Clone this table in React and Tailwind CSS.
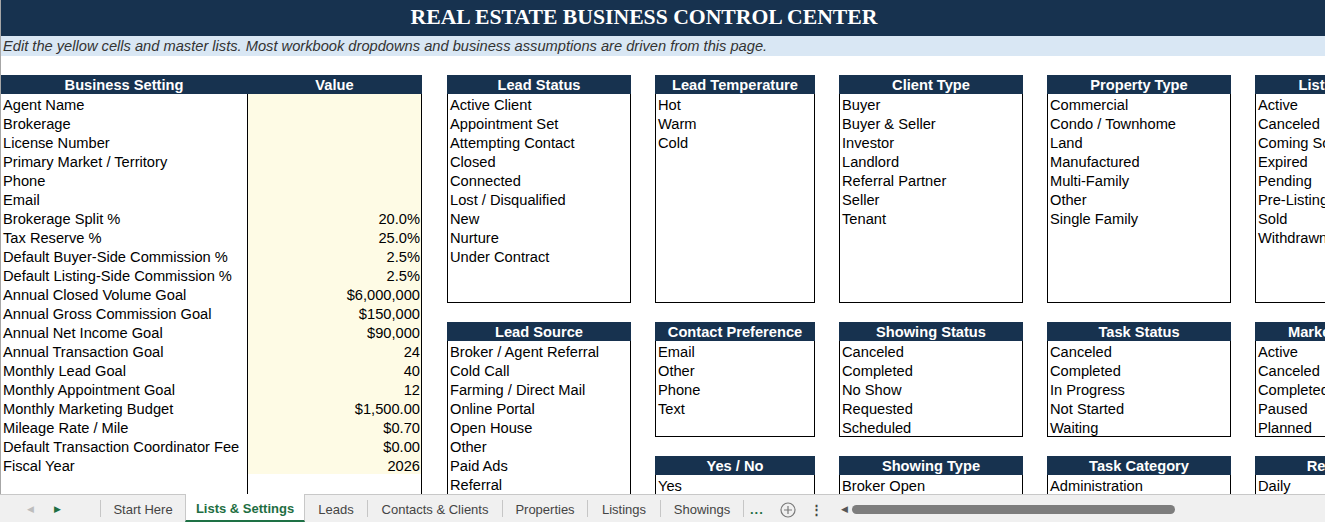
import React from "react";

const settings = [
  ["Agent Name", ""],
  ["Brokerage", ""],
  ["License Number", ""],
  ["Primary Market / Territory", ""],
  ["Phone", ""],
  ["Email", ""],
  ["Brokerage Split %", "20.0%"],
  ["Tax Reserve %", "25.0%"],
  ["Default Buyer-Side Commission %", "2.5%"],
  ["Default Listing-Side Commission %", "2.5%"],
  ["Annual Closed Volume Goal", "$6,000,000"],
  ["Annual Gross Commission Goal", "$150,000"],
  ["Annual Net Income Goal", "$90,000"],
  ["Annual Transaction Goal", "24"],
  ["Monthly Lead Goal", "40"],
  ["Monthly Appointment Goal", "12"],
  ["Monthly Marketing Budget", "$1,500.00"],
  ["Mileage Rate / Mile", "$0.70"],
  ["Default Transaction Coordinator Fee", "$0.00"],
  ["Fiscal Year", "2026"],
];

// each column of master lists, stacked top to bottom
const columns = [
  {
    width: "w-[184px]",
    lists: [
      {
        title: "Lead Status",
        body: "h-[209px]",
        items: ["Active Client", "Appointment Set", "Attempting Contact", "Closed", "Connected", "Lost / Disqualified", "New", "Nurture", "Under Contract"],
      },
      {
        title: "Lead Source",
        body: "h-[209px]",
        items: ["Broker / Agent Referral", "Cold Call", "Farming / Direct Mail", "Online Portal", "Open House", "Other", "Paid Ads", "Referral"],
      },
    ],
  },
  {
    width: "w-[160px]",
    lists: [
      { title: "Lead Temperature", body: "h-[209px]", items: ["Hot", "Warm", "Cold"] },
      { title: "Contact Preference", body: "h-[96px]", items: ["Email", "Other", "Phone", "Text"] },
      { title: "Yes / No", body: "h-[60px]", items: ["Yes"] },
    ],
  },
  {
    width: "w-[184px]",
    lists: [
      { title: "Client Type", body: "h-[209px]", items: ["Buyer", "Buyer & Seller", "Investor", "Landlord", "Referral Partner", "Seller", "Tenant"] },
      { title: "Showing Status", body: "h-[96px]", items: ["Canceled", "Completed", "No Show", "Requested", "Scheduled"] },
      { title: "Showing Type", body: "h-[60px]", items: ["Broker Open"] },
    ],
  },
  {
    width: "w-[184px]",
    lists: [
      { title: "Property Type", body: "h-[209px]", items: ["Commercial", "Condo / Townhome", "Land", "Manufactured", "Multi-Family", "Other", "Single Family"] },
      { title: "Task Status", body: "h-[96px]", items: ["Canceled", "Completed", "In Progress", "Not Started", "Waiting"] },
      { title: "Task Category", body: "h-[60px]", items: ["Administration"] },
    ],
  },
  {
    width: "w-[184px]",
    lists: [
      { title: "Listing Status", body: "h-[209px]", items: ["Active", "Canceled", "Coming Soon", "Expired", "Pending", "Pre-Listing", "Sold", "Withdrawn"] },
      { title: "Marketing Status", body: "h-[96px]", items: ["Active", "Canceled", "Completed", "Paused", "Planned"] },
      { title: "Recurrence", body: "h-[60px]", items: ["Daily"] },
    ],
  },
];

const tabs = [
  { name: "Start Here", w: "w-[84px]" },
  { name: "Lists & Settings", w: "w-[120px]", active: true },
  { name: "Leads", w: "w-[62px]" },
  { name: "Contacts & Clients", w: "w-[134px]" },
  { name: "Properties", w: "w-[84px]" },
  { name: "Listings", w: "w-[72px]" },
  { name: "Showings", w: "w-[82px]" },
];

const ListBox = ({ title, body, items, first }) => (
  <div className={first ? "" : "mt-[19px]"}>
    <div className="h-[19px] bg-[#17324f] text-white font-bold text-center leading-[20px]">
      {title}
    </div>
    <div className={`${body} border-x border-b border-black overflow-hidden`}>
      {items.map((item, i) => (
        <div key={i} className="h-[19px] leading-[22px] pl-[2px] whitespace-nowrap">
          {item}
        </div>
      ))}
    </div>
  </div>
);

const App = () => {
  return (
    <div
      className="w-[1325px] h-[522px] overflow-hidden flex flex-col bg-white text-black text-[14.67px]"
      style={{ fontFamily: '"Liberation Sans", Arial, sans-serif' }}
    >
      <div className="flex-1 flex flex-col overflow-hidden border-l border-[#a6a6a6]">
        {/* Title */}
        <div
          className="h-[36px] shrink-0 bg-[#17324f] text-white font-bold text-[21.7px] flex items-center justify-center pr-[38px] pb-[1px]"
          style={{ fontFamily: '"Liberation Serif", "Times New Roman", serif' }}
        >
          REAL ESTATE BUSINESS CONTROL CENTER
        </div>

        {/* Subtitle */}
        <div className="h-[20px] shrink-0 bg-[#d9e7f4] italic text-[14.67px] text-[#333] leading-[21px] pl-[2px] whitespace-nowrap">
          Edit the yellow cells and master lists. Most workbook dropdowns and business assumptions are driven from this page.
        </div>

        {/* Sheet body */}
        <div className="flex-1 flex pt-[19px] overflow-hidden">
          {/* Settings table */}
          <div className="w-[421px] shrink-0 flex flex-col">
            <div className="flex h-[19px] bg-[#17324f] text-white font-bold leading-[20px]">
              <div className="w-[246px] text-center">Business Setting</div>
              <div className="w-[175px] text-center">Value</div>
            </div>
            {settings.map(([label, value]) => (
              <div key={label} className="flex h-[19px] leading-[22px]">
                <div className="w-[246px] pl-[2px] whitespace-nowrap">{label}</div>
                <div className="w-[175px] border-x border-black bg-[#fefbe5] text-right pr-[1px]">{value}</div>
              </div>
            ))}
            <div className="flex flex-1">
              <div className="w-[246px]"></div>
              <div className="w-[175px] border-x border-black"></div>
            </div>
          </div>

          {/* Master lists */}
          <div className="flex gap-[24px] ml-[25px]">
            {columns.map((col, ci) => (
              <div key={ci} className={`${col.width} shrink-0 flex flex-col`}>
                {col.lists.map((list, li) => (
                  <ListBox key={list.title} {...list} first={li === 0} />
                ))}
              </div>
            ))}
          </div>
        </div>
      </div>

      {/* Sheet tabs */}
      <div
        className="h-[28px] shrink-0 bg-[#f0f0f0] border-t border-[#c8c8c8] flex items-stretch text-[13px] text-[#444]"
        style={{ fontFamily: '"Liberation Sans", Arial, sans-serif' }}
      >
        <div className="w-[100px] flex items-center pt-[2px]">
          <span className="ml-[27px] text-[9px] text-[#bdbdbd]">◀</span>
          <span className="ml-[20px] text-[9px] text-[#1e6e42]">▶</span>
        </div>
        <div className="w-px bg-[#c6c6c6] my-[5px]"></div>
        {tabs.map((t, i) =>
          t.active ? (
            <div
              key={t.name}
              className={`${t.w} -mt-px pt-[3px] bg-white border-x border-[#c8c8c8] border-b-2 border-b-[#1e7145] flex items-center justify-center font-bold text-[#1e6e42]`}
            >
              {t.name}
            </div>
          ) : (
            <React.Fragment key={t.name}>
              <div className={`${t.w} pt-[2px] flex items-center justify-center`}>{t.name}</div>
              {!tabs[i + 1]?.active && <div className="w-px bg-[#c6c6c6] my-[5px]"></div>}
            </React.Fragment>
          )
        )}
        <div className="flex items-center pt-[2px]">
          <span className="ml-[6px] font-bold text-[#1e6e42] tracking-[1px]">...</span>
          <svg className="ml-[16px]" width="16" height="16" viewBox="0 0 16 16">
            <circle cx="8" cy="8" r="7" fill="none" stroke="#7a7a7a" strokeWidth="1.2" />
            <path d="M8 4v8M4 8h8" stroke="#7a7a7a" strokeWidth="1.2" />
          </svg>
          <span className="ml-[14px] text-[#444] font-bold">⋮</span>
          <span className="ml-[18px] text-[9px] text-[#555]">◀</span>
          <div className="ml-[4px] w-[323px] h-[9px] rounded-full bg-[#7d7d7d]"></div>
        </div>
      </div>
    </div>
  );
};

export default App;
